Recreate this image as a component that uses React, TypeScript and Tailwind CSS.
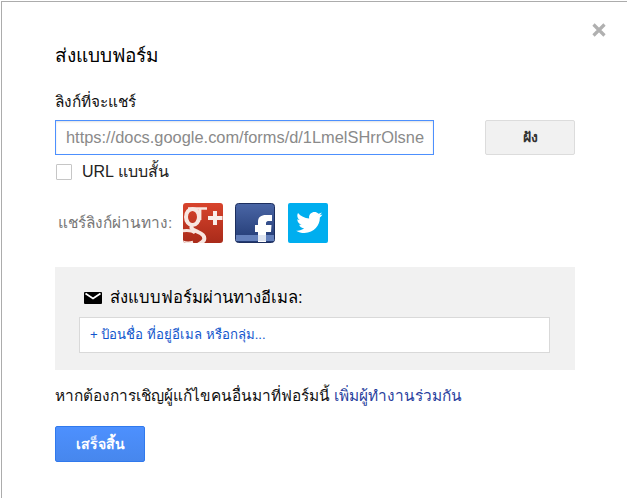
import React from 'react';

const GooglePlusIcon = () => (
  <svg width="40" height="40" viewBox="0 0 40 40">
    <defs>
      <linearGradient id="gp" x1="0" y1="0" x2="0" y2="1">
        <stop offset="0" stopColor="#d8432c" />
        <stop offset="1" stopColor="#a92b1a" />
      </linearGradient>
      <clipPath id="gpClip">
        <rect width="40" height="40" rx="3" />
      </clipPath>
    </defs>
    <rect width="40" height="40" rx="3" fill="url(#gp)" />
    <g clipPath="url(#gpClip)" fill="none" stroke="#f8e6e0">
      <ellipse cx="9.5" cy="14" rx="6.5" ry="8" strokeWidth="4" />
      <path d="M5 5.5 H24" strokeWidth="2.6" />
      <path d="M17 6 V17" strokeWidth="2.8" />
      <path d="M9 23 C7 26 11 27 15 29 C20 31 22 34 21 37 C20 39 18 40 15 42" strokeWidth="4" />
      <path d="M-2 28 C4 27 9 27 12 30" strokeWidth="3" />
      <path d="M-2 38 C2 40 6 40 10 39" strokeWidth="2.4" />
    </g>
    <path d="M30 8 H34 V13 H39.500 V17 H34 V22 H30 V17 H25 V13 H30 Z" fill="#f9ece8" />
  </svg>
);

const FacebookIcon = () => (
  <svg width="40" height="40" viewBox="0 0 40 40">
    <defs>
      <linearGradient id="fb" x1="0" y1="0" x2="0" y2="1">
        <stop offset="0" stopColor="#4a66a6" />
        <stop offset="1" stopColor="#223a73" />
      </linearGradient>
    </defs>
    <rect x="0.5" y="0.5" width="39" height="39" rx="3" fill="url(#fb)" stroke="#1d2f5f" />
    <rect x="1" y="32" width="38" height="6" fill="#6480bb" />
    <path d="M23 39 V29 H20 V22 H23 V19 C23 14 26 12 31 12 H37 V18 H33 C32 18 31 19 31 20 V22 H36.500 L36 29 H31 V39 Z" fill="#fff" />
    <rect x="23" y="32" width="8" height="6" fill="#dfe5f1" />
  </svg>
);

const TwitterIcon = () => (
  <svg width="40" height="40" viewBox="0 0 40 40">
    <rect width="40" height="40" rx="2" fill="#00aeef" />
    <path
      transform="translate(4 2.500) scale(0.87 0.85)"
      d="M35 10.5 C33.9 11 32.8 11.3 31.6 11.5 C32.8 10.7 33.8 9.6 34.2 8.2 C33 8.9 31.8 9.4 30.4 9.7 C29.2 8.4 27.6 7.7 25.8 7.7 C22.4 7.7 19.6 10.4 19.6 13.9 C19.6 14.4 19.7 14.9 19.8 15.3 C14.6 15 10 12.6 6.9 8.9 C6.4 9.8 6.1 10.9 6.1 12 C6.1 14.1 7.2 16 8.9 17.1 C7.9 17.1 6.9 16.8 6.1 16.3 V16.4 C6.1 19.4 8.2 21.9 11.1 22.5 C10.1 22.8 9.1 22.8 8.2 22.6 C9 25 11.3 26.8 14 26.9 C11.3 29 8 30 4.8 29.6 C7.6 31.4 10.8 32.4 14.3 32.4 C25.7 32.4 32 23 32 14.8 V14 C33.2 13.1 34.2 11.9 35 10.5 Z"
      fill="#fff"
    />
  </svg>
);

const MailIcon = () => (
  <svg width="18" height="12" viewBox="0 0 18 12" className="shrink-0">
    <rect width="18" height="12" rx="1" fill="#000" />
    <path d="M1.5 1.500 L9 6.500 L16.500 1.500" fill="none" stroke="#fff" strokeWidth="1.800" />
  </svg>
);

const CloseIcon = () => (
  <svg width="14" height="14" viewBox="0 0 14 14">
    <path d="M1.5 1.5 L12.5 12.5 M12.5 1.5 L1.5 12.5" stroke="#b0b0b0" strokeWidth="3.2" />
  </svg>
);

export default function App() {
  return (
    <div className="w-[627px] h-[498px] overflow-hidden bg-white font-['Liberation_Sans','Noto_Sans','DejaVu_Sans',sans-serif]">
      <div className="relative ml-px mt-px h-[497px] border-t border-l border-[#acacac] bg-white pl-[53px] pr-[52px]">
        <button className="absolute right-[21px] top-[21px] flex">
          <CloseIcon />
        </button>

        <h1 className="pt-[42px] text-[19px] leading-[24px] font-normal text-black">ส่งแบบฟอร์ม</h1>

        <label className="mt-[24px] block text-[15.4px] leading-[20px] text-[#111]">ลิงก์ที่จะแชร์</label>

        <div className="mt-[8px] flex items-start justify-between">
          <input
            readOnly
            value="https://docs.google.com/forms/d/1LmelSHrrOlsne0Qx3vYbT"
            className="h-[35px] w-[379px] border border-[#4d90fe] pl-[10px] pr-[9px] text-[16.4px] text-[#8a8a8a] shadow-[inset_0_1px_2px_rgba(0,0,0,0.12)] outline-none"
          />
          <button className="flex h-[35px] w-[90px] items-center justify-center rounded-[2px] border border-[#dcdcdc] bg-[#f1f1f1] text-[14px] font-bold text-[#333]">
            ฝัง
          </button>
        </div>

        <div className="mt-[9px] flex items-center">
          <span className="ml-px h-[16px] w-[16px] rounded-[1px] border border-[#c6c6c6] bg-white" />
          <span className="ml-[10px] text-[16px] leading-[16px] text-[#222]">URL แบบสั้น</span>
        </div>

        <div className="mt-[23px] flex items-center">
          <span className="ml-[3px] w-[125px] whitespace-nowrap text-[15.4px] leading-[20px] text-[#777]">แชร์ลิงก์ผ่านทาง:</span>
          <GooglePlusIcon />
          <span className="ml-[12px] flex"><FacebookIcon /></span>
          <span className="ml-[13px] flex"><TwitterIcon /></span>
        </div>

        <div className="mt-[24px] h-[103px] bg-[#f1f1f1] pt-[21px] pl-[24px] pr-[25px]">
          <div className="flex h-[20px] items-center pl-[5px]">
            <MailIcon />
            <span className="ml-[8px] text-[16.6px] leading-[20px] text-black">ส่งแบบฟอร์มผ่านทางอีเมล:</span>
          </div>
          <div className="mt-[9px] flex h-[36px] items-center border border-[#d9d9d9] bg-white pl-[10px] text-[13.2px] text-[#15c]">
            + ป้อนชื่อ ที่อยู่อีเมล หรือกลุ่ม...
          </div>
        </div>

        <p className="mt-[16px] text-[15.4px] leading-[20px] text-[#111]">
          หากต้องการเชิญผู้แก้ไขคนอื่นมาที่ฟอร์มนี้ <a className="text-[#2a3f9e]">เพิ่มผู้ทำงานร่วมกัน</a>
        </p>

        <button className="mt-[20px] flex h-[36px] w-[90px] items-center justify-center rounded-[2px] border border-[#3079ed] bg-gradient-to-b from-[#4d90fe] to-[#4787ed] text-[14px] font-bold text-white">
          เสร็จสิ้น
        </button>
      </div>
    </div>
  );
}
